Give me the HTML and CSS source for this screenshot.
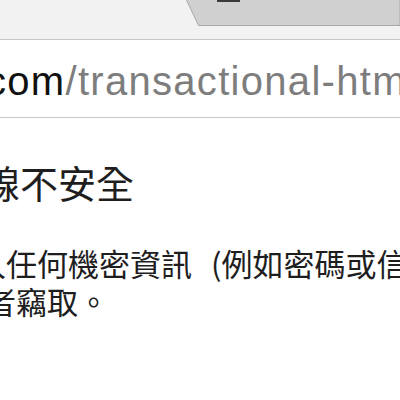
FILE: index.html
```html
<!DOCTYPE html>
<html lang="zh-Hant">
<head>
<meta charset="utf-8">
<title>連線不安全</title>
<link rel="stylesheet" href="styles.css">
</head>
<body>
<div class="chrome">
  <div class="tabstrip">
    <svg class="tab" width="214" height="27" viewBox="0 0 214 27">
      <path d="M0 -1 L12.5 25.5 L214 25.5 L214 -1 Z" fill="#d0d0d0" stroke="#a9a9a9" stroke-width="1"/>
      <rect x="31" y="0" width="23" height="2" fill="#3a3a3a"/>
    </svg>
  </div>
  <div class="omnibox">
    <span class="url"><span class="host">com</span>/transactional-html</span>
  </div>
</div>
<div class="bubble">
  <h1 class="title">線不安全</h1>
  <p class="desc"><span class="line">入任何機密資訊 (例如密碼或信用卡)</span><span class="line">擊者竊取。</span></p>
</div>
</body>
</html>
```

FILE: styles.css
```css
html, body {
  margin: 0;
  padding: 0;
  background: #ffffff;
  overflow: hidden;
  width: 400px;
  height: 400px;
}

.chrome {
  background: #f2f2f2;
}

.tabstrip {
  height: 39px;
  display: flex;
  align-items: flex-start;
  overflow: hidden;
}

.tab {
  display: block;
  margin-left: 186px;
  flex: none;
}

.omnibox {
  height: 77px;
  background: #ffffff;
  border-top: 1px solid #c6c6c6;
  border-bottom: 1px solid #c6c6c6;
  display: flex;
  align-items: center;
  overflow: hidden;
  white-space: nowrap;
}

.url {
  font-family: "Liberation Sans", Arial, sans-serif;
  font-size: 40px;
  letter-spacing: 1.3px;
  line-height: 1;
  color: #7d7d7d;
  margin-left: -14px;
  padding-top: 4px;
}

.host {
  color: #111111;
}

.bubble {
  font-family: "Noto Sans CJK TC", "Noto Sans CJK SC", sans-serif;
  color: #1e1e1e;
  white-space: nowrap;
}

.title {
  font-size: 38px;
  font-weight: 400;
  line-height: 1;
  margin: 45px 0 0 -18px;
}

.desc {
  font-size: 31px;
  line-height: 38px;
  word-spacing: 12px;
  margin: 43px 0 0 -25px;
  display: flex;
  flex-direction: column;
}

.line + .line {
  margin-left: -21px;
}
```
